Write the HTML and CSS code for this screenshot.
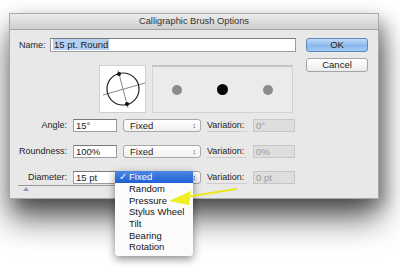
FILE: index.html
```html
<!DOCTYPE html>
<html lang="en">
<head>
  <meta charset="UTF-8">
  <title>Calligraphic Brush Options</title>
  <meta name="viewport" content="width=device-width, initial-scale=1.0" />
  <link rel="stylesheet" href="styles.css">
</head>
<body>

  <div class="window">
    <div class="titlebar">Calligraphic Brush Options</div>

    <div class="window-body">
      <div class="main">

        <div class="name-row">
          <span class="label">Name:</span>
          <div class="field name-field"><span class="selected">15 pt. Round</span></div>
        </div>

        <div class="preview">
          <div class="angle-box">
            <svg width="47" height="48" viewBox="0 0 47 48">
              <line x1="4" y1="30" x2="46" y2="18" stroke="#8a8a8a" stroke-width="1"/>
              <line x1="19" y1="5" x2="29" y2="43" stroke="#8a8a8a" stroke-width="1"/>
              <circle cx="24" cy="24" r="16" fill="none" stroke="#222" stroke-width="1.2"/>
              <circle cx="20" cy="9" r="2" fill="#111"/>
              <circle cx="28" cy="39" r="2" fill="#111"/>
            </svg>
          </div>
          <div class="dots-box">
            <span class="dot"></span>
            <span class="dot dot-main"></span>
            <span class="dot"></span>
          </div>
        </div>

        <div class="rows">
          <span class="label right">Angle:</span>
          <div class="field">15°</div>
          <div class="select">Fixed<span class="updown">&#8597;</span></div>
          <span class="label var-label">Variation:</span>
          <div class="field disabled">0°</div>

          <span class="label right">Roundness:</span>
          <div class="field">100%</div>
          <div class="select">Fixed<span class="updown">&#8597;</span></div>
          <span class="label var-label">Variation:</span>
          <div class="field disabled">0%</div>

          <span class="label right">Diameter:</span>
          <div class="field">15 pt</div>
          <div class="select">Fixed<span class="updown">&#8597;</span></div>
          <span class="label var-label">Variation:</span>
          <div class="field disabled">0 pt</div>
        </div>

        <div class="slider">
          <span class="thumb"></span>
        </div>
      </div>

      <div class="buttons">
        <div class="btn btn-default">OK</div>
        <div class="btn">Cancel</div>
      </div>
    </div>
  </div>

  <!-- popup menu of the Diameter select -->
  <ul class="menu">
    <li class="active"><span class="check">&#10003;</span>Fixed</li>
    <li>Random</li>
    <li>Pressure</li>
    <li>Stylus Wheel</li>
    <li>Tilt</li>
    <li>Bearing</li>
    <li>Rotation</li>
  </ul>

  <svg class="arrow" width="400" height="278" viewBox="0 0 400 278">
    <line x1="236" y1="189" x2="186" y2="197" stroke="#e8e81c" stroke-width="2" stroke-linecap="round"/>
    <polygon points="169,201 191,191 189,205" fill="#eeee20"/>
  </svg>

</body>
</html>
```

FILE: styles.css
```css
:root {
  --text: #1e1e1e;
  --panel: #e8e8e8;
  --field-border: #9d9d9d;
  --font-main: 'Liberation Sans', 'Arial', sans-serif;
}

body {
  margin: 0;
  width: 400px;
  height: 278px;
  overflow: hidden;
  background: #ffffff;
  font-family: var(--font-main);
  font-size: 9px;
  color: var(--text);
  position: relative;
}

.window {
  box-sizing: border-box;
  width: 370px;
  height: 186px;
  margin: 13px 0 0 9px;
  background: var(--panel);
  border: 1px solid #a9a9a9;
  box-shadow: 0 20px 30px rgba(0, 0, 0, 0.6), 6px 8px 16px rgba(0, 0, 0, 0.3);
}

.titlebar {
  height: 15px;
  line-height: 15px;
  text-align: center;
  font-size: 9.3px;
  color: #333;
  background: linear-gradient(#ececec, #cfcfcf);
  border-bottom: 1px solid #a4a4a4;
}

.window-body {
  display: flex;
  padding: 8px 10px 0 9px;
}

.main {
  width: 287px;
}

.label {
  line-height: 13px;
  white-space: nowrap;
}

.right {
  text-align: right;
}

.name-row {
  display: flex;
  align-items: center;
  height: 14px;
}

.name-row .label {
  width: 31px;
}

.field {
  box-sizing: border-box;
  height: 13px;
  line-height: 11px;
  padding: 0 2px;
  background: #ffffff;
  border: 1px solid var(--field-border);
  border-top-color: #7a7a7a;
  font-size: 9.5px;
  white-space: nowrap;
}

.name-field {
  width: 246px;
  height: 14px;
  line-height: 12px;
}

.selected {
  background: #b4cff2;
  padding: 0 1px;
}

.field.disabled {
  background: #dedede;
  border-color: #c6c6c6;
  color: #9a9a9a;
}

.preview {
  display: flex;
  gap: 6px;
  margin: 13px 0 0 80px;
  height: 48px;
}

.angle-box {
  width: 47px;
  background: #ffffff;
  border: 1px solid #cfcfcf;
  box-sizing: border-box;
}

.angle-box svg {
  display: block;
  margin: -1px;
}

.dots-box {
  box-sizing: border-box;
  width: 141px;
  display: flex;
  justify-content: space-around;
  align-items: center;
  padding: 0 2px;
  background: #ebebeb;
  border: 1px solid #d2d2d2;
  border-top: 2px solid #c4c4c4;
}

.dot {
  width: 10px;
  height: 10px;
  border-radius: 50%;
  background: #8b8b8b;
}

.dot-main {
  width: 11px;
  height: 11px;
  background: #050505;
}

.rows {
  display: grid;
  grid-template-columns: 48px 44px 78px 40px 42px;
  column-gap: 6px;
  row-gap: 13px;
  margin-top: 6px;
  grid-auto-rows: 13px;
}

.select {
  position: relative;
  box-sizing: border-box;
  height: 13px;
  line-height: 11px;
  padding-left: 6px;
  font-size: 9.5px;
  background: linear-gradient(#ffffff, #f0f0f0);
  border: 1px solid #a8a8a8;
  border-radius: 3px;
}

.updown {
  position: absolute;
  right: 4px;
  top: 0;
  font-size: 7px;
  color: #444;
}

.var-label {
  border-bottom: 1px solid #cdcdcd;
  line-height: 12px;
}

.slider {
  position: relative;
  margin: 1px 0 0 -1px;
  width: 100px;
  border-top: 1px solid #9b9b9b;
  height: 4px;
}

.thumb {
  position: absolute;
  left: 5px;
  top: 1px;
  border-left: 3px solid transparent;
  border-right: 3px solid transparent;
  border-bottom: 4px solid #8d9cc0;
}

.buttons {
  display: flex;
  flex-direction: column;
  gap: 6px;
  margin-left: 10px;
}

.btn {
  box-sizing: border-box;
  width: 62px;
  height: 14px;
  line-height: 12px;
  text-align: center;
  font-size: 9.5px;
  color: #222;
  background: linear-gradient(#ffffff, #ececec);
  border: 1px solid #a5a5a5;
  border-radius: 3px;
}

.btn-default {
  background: linear-gradient(#c3dbf7, #89b7ee 55%, #a4cbf4);
  border-color: #5f86be;
}

.menu {
  position: absolute;
  left: 115px;
  top: 171px;
  width: 78px;
  margin: 0;
  padding: 0 0 3px;
  list-style: none;
  background: #fbfbfb;
  box-shadow: 0 3px 8px rgba(0, 0, 0, 0.45);
  border-radius: 0 0 3px 3px;
  font-size: 9.5px;
}

.menu li {
  height: 11.7px;
  line-height: 11.7px;
  padding-left: 14px;
  position: relative;
  color: #151515;
}

.menu li.active {
  height: 12px;
  line-height: 12px;
  color: #ffffff;
  background: linear-gradient(#4c86e4, #1f5fd6);
}

.check {
  position: absolute;
  left: 4px;
}

.arrow {
  position: absolute;
  left: 0;
  top: 0;
  pointer-events: none;
}
```
